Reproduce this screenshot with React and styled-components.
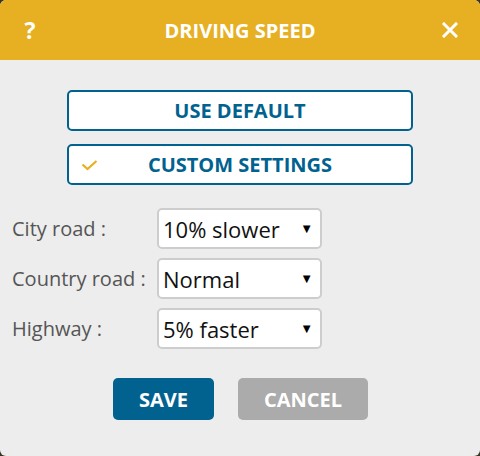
import React, { useState } from "react";
import styled, { createGlobalStyle } from "styled-components";

const GlobalStyle = createGlobalStyle`
  html, body {
    margin: 0;
    padding: 0;
    background: #3b3424;
  }
  body {
    font-family: "Open Sans", "Liberation Sans", sans-serif;
  }
`;

const speeds = ["20% slower", "10% slower", "5% slower", "Normal", "5% faster", "10% faster"];

function App() {
  const [mode, setMode] = useState("custom");
  const [city, setCity] = useState("10% slower");
  const [country, setCountry] = useState("Normal");
  const [highway, setHighway] = useState("5% faster");

  const rows = [
    { label: "City road :", value: city, set: setCity },
    { label: "Country road :", value: country, set: setCountry },
    { label: "Highway :", value: highway, set: setHighway },
  ];

  return (
    <>
      <GlobalStyle />
      <Dialog>
        <Header>
          <HeaderIcon>?</HeaderIcon>
          <Title>DRIVING SPEED</Title>
          <HeaderIcon>
            <svg width="16" height="16" viewBox="0 0 16 16">
              <path d="M2 2 L14 14 M14 2 L2 14" stroke="#fff" strokeWidth="3" strokeLinecap="square" />
            </svg>
          </HeaderIcon>
        </Header>
        <Body>
          <Modes>
            <ModeButton onClick={() => setMode("default")}>
              {mode === "default" && <Check />}
              USE DEFAULT
            </ModeButton>
            <ModeButton onClick={() => setMode("custom")}>
              {mode === "custom" && <Check />}
              CUSTOM SETTINGS
            </ModeButton>
          </Modes>
          <Rows>
            {rows.map((r) => (
              <Row key={r.label}>
                <Label>{r.label}</Label>
                <SelectWrap>
                  <Select value={r.value} onChange={(e) => r.set(e.target.value)}>
                    {speeds.map((s) => (
                      <option key={s} value={s}>{s}</option>
                    ))}
                  </Select>
                  <Arrow>▼</Arrow>
                </SelectWrap>
              </Row>
            ))}
          </Rows>
          <Actions>
            <ActionButton primary>SAVE</ActionButton>
            <ActionButton>CANCEL</ActionButton>
          </Actions>
        </Body>
      </Dialog>
    </>
  );
}

function Check() {
  return (
    <CheckMark width="18" height="14" viewBox="0 0 18 14">
      <path d="M1.5 6.5 L6.5 11 L15.5 3" fill="none" stroke="#e6b021" strokeWidth="2.2" />
    </CheckMark>
  );
}

const Dialog = styled.div`
  width: 480px;
  height: 456px;
  background: #ededed;
  border-radius: 6px;
  overflow: hidden;
  display: flex;
  flex-direction: column;
`;

const Header = styled.div`
  height: 60px;
  background: #e6b022;
  display: flex;
  align-items: center;
  justify-content: space-between;
  padding: 0 20px;
  box-sizing: border-box;
  color: #fff;
`;

const HeaderIcon = styled.div`
  width: 20px;
  display: flex;
  justify-content: center;
  align-items: center;
  font-weight: 700;
  font-size: 23px;
`;

const Title = styled.div`
  font-weight: 700;
  font-size: 20px;
`;

const Body = styled.div`
  display: flex;
  flex-direction: column;
  padding: 30px 0 0;
`;

const Modes = styled.div`
  display: flex;
  flex-direction: column;
  gap: 13px;
  align-items: center;
`;

const ModeButton = styled.button`
  position: relative;
  width: 346px;
  height: 41px;
  box-sizing: border-box;
  background: #fff;
  border: 2px solid #02628f;
  border-radius: 5px;
  color: #02628f;
  font-family: "Open Sans", "Liberation Sans", sans-serif;
  font-weight: 700;
  font-size: 20px;
  cursor: pointer;
  padding: 0;
`;

const CheckMark = styled.svg`
  position: absolute;
  left: 12px;
  top: 12px;
`;

const Rows = styled.div`
  display: flex;
  flex-direction: column;
  gap: 9px;
  margin-top: 23px;
  padding-left: 12px;
`;

const Row = styled.div`
  display: flex;
  align-items: center;
`;

const Label = styled.div`
  width: 145px;
  font-size: 20px;
  color: #555;
`;

const SelectWrap = styled.div`
  position: relative;
  width: 165px;
  height: 41px;
`;

const Select = styled.select`
  width: 100%;
  height: 100%;
  box-sizing: border-box;
  appearance: none;
  background: #fff;
  border: 2px solid #cdcdcd;
  border-radius: 5px;
  padding: 0 0 0 4px;
  font-family: "Open Sans", "Liberation Sans", sans-serif;
  font-size: 22px;
  color: #111;
  outline: none;
`;

const Arrow = styled.span`
  position: absolute;
  right: 9px;
  top: 11px;
  font-size: 13px;
  color: #000;
  pointer-events: none;
`;

const Actions = styled.div`
  display: flex;
  justify-content: center;
  gap: 24px;
  margin-top: 29px;
  padding-left: 1px;
`;

const ActionButton = styled.button`
  height: 42px;
  padding: 0 26px;
  border: none;
  border-radius: 5px;
  background: ${(p) => (p.primary ? "#02628f" : "#ababab")};
  color: #fff;
  font-family: "Open Sans", "Liberation Sans", sans-serif;
  font-weight: 700;
  font-size: 20px;
  cursor: pointer;
`;

export default App;
